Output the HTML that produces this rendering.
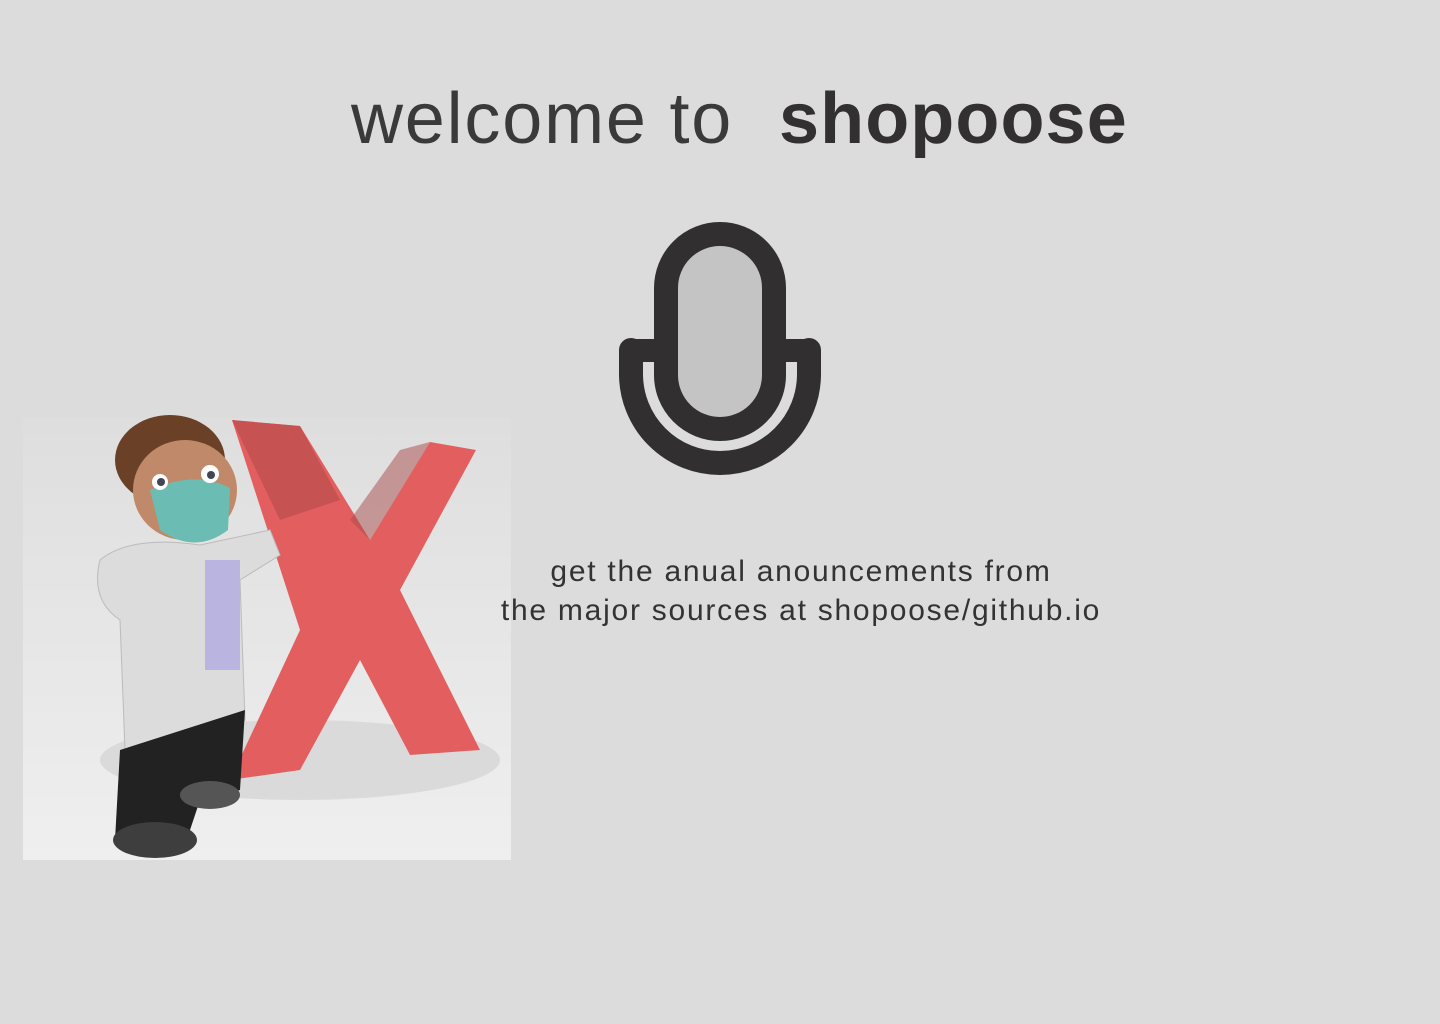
<!DOCTYPE html>
<html><head><meta charset="utf-8"><style>
html,body{margin:0;padding:0;background:#dcdcdc;width:1440px;height:1024px;overflow:hidden;font-family:"Liberation Sans",sans-serif;color:#323031}
.w{position:absolute;left:351px;top:78px;font-size:72px;letter-spacing:1.8px;color:#3a3a3a;white-space:nowrap}
.b{position:absolute;left:779px;top:78px;font-size:72px;font-weight:700;letter-spacing:1.1px;color:#323031;white-space:nowrap}
.s{position:absolute;left:400px;width:802px;top:552px;text-align:center;font-size:30px;line-height:39px;letter-spacing:1.75px;color:#333}
</style></head><body>
<div class="w">welcome to</div><div class="b">shopoose</div>
<svg style="position:absolute;left:0;top:0" width="1440" height="1024">
<path d="M631 350 L631 374 A89 89 0 0 0 809 374 L809 350" fill="none" stroke="#322f30" stroke-width="24" stroke-linecap="round"/>
<path d="M631 339 L660 339 L660 362 L631 362 Z M780 339 L809 339 L809 362 L780 362 Z" fill="#322f30"/>
<path d="M648.5 362 L648.5 374 A71.5 71.5 0 0 0 791.5 374 L791.5 362" fill="none" stroke="#dcdcdc" stroke-width="9"/>
<rect x="666" y="234" width="108" height="195" rx="54" fill="#c4c4c4" stroke="#322f30" stroke-width="24"/>
<defs><linearGradient id="bg" x1="0" y1="0" x2="0" y2="1"><stop offset="0" stop-color="#dedede"/><stop offset="1" stop-color="#efefef"/></linearGradient></defs>
<rect x="23" y="418" width="488" height="442" fill="url(#bg)"/>
<ellipse cx="300" cy="760" rx="200" ry="40" fill="#cfcfcf" opacity=".6"/>
<polygon points="232,420 300,426 370,540 430,442 476,450 400,590 480,750 410,755 360,660 300,770 230,780 300,630" fill="#e35f5f"/>
<polygon points="232,420 300,426 340,500 280,520" fill="#b44a4a" opacity=".6"/>
<polygon points="370,540 430,442 400,450 350,520" fill="#a84a4a" opacity=".5"/>
<ellipse cx="170" cy="460" rx="55" ry="45" fill="#6a4126"/>
<ellipse cx="185" cy="490" rx="52" ry="50" fill="#c08a6a"/>
<path d="M150 490 Q195 470 230 488 L228 530 Q195 555 160 530 Z" fill="#6bbcb3"/>
<circle cx="160" cy="482" r="8" fill="#fff"/><circle cx="210" cy="474" r="9" fill="#fff"/>
<circle cx="161" cy="482" r="4" fill="#445"/><circle cx="211" cy="475" r="4" fill="#445"/>
<path d="M100 560 Q130 535 200 545 L270 530 L280 555 L240 580 L245 720 Q200 760 125 750 L120 620 Q90 600 100 560 Z" fill="#dcdcdc" stroke="#bbb"/>
<rect x="205" y="560" width="35" height="110" fill="#b9b5e0"/>
<path d="M120 750 L245 710 L240 790 L200 800 L190 830 L115 840 Z" fill="#222"/>
<ellipse cx="155" cy="840" rx="42" ry="18" fill="#3e3e3e"/>
<ellipse cx="210" cy="795" rx="30" ry="14" fill="#555"/>
</svg>
<div class="s">get the anual anouncements from<br>the major sources at shopoose/github.io</div>
</body></html>
